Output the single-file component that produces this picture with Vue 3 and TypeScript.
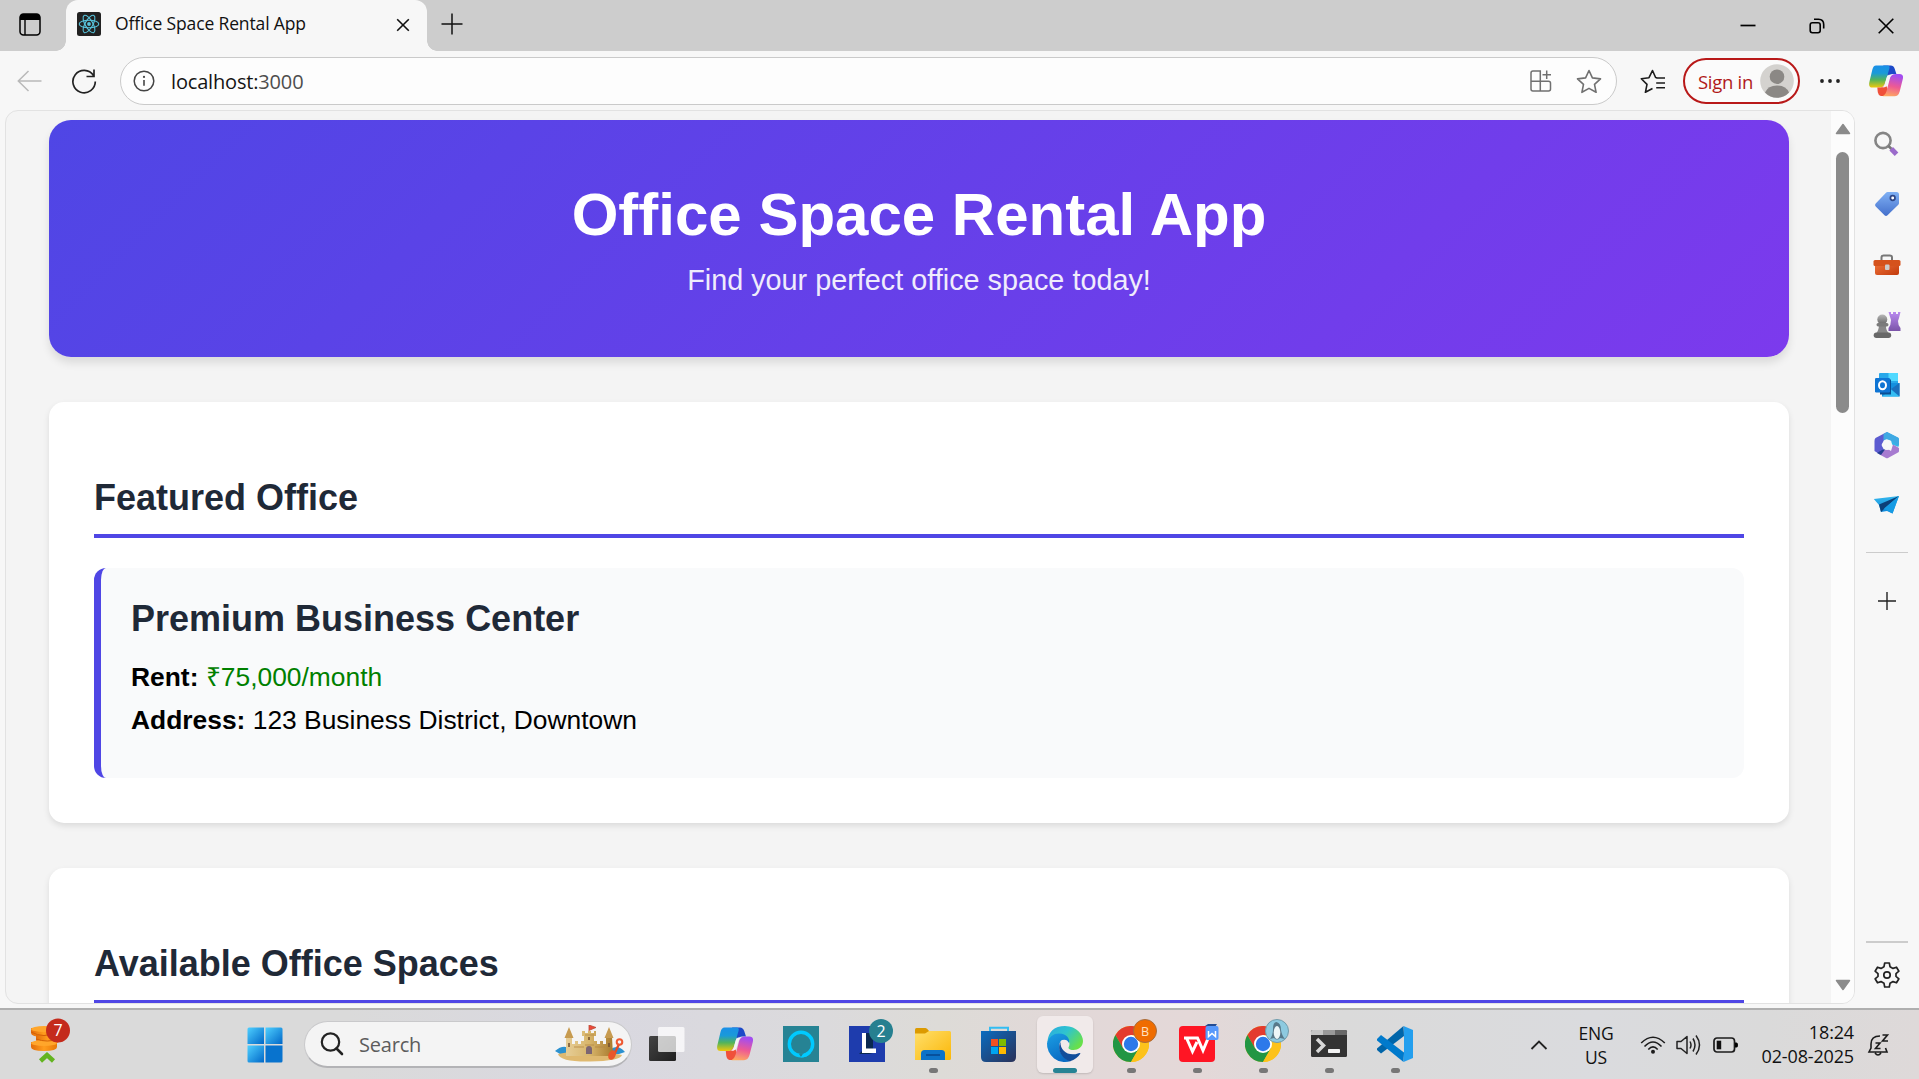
<script setup lang="ts">
interface Office {
  name: string
  rent: string
  address: string
}

interface TaskItem {
  id: string
  running: boolean
  active?: boolean
}

const title = 'Office Space Rental App'

const featured: Office = {
  name: 'Premium Business Center',
  rent: '₹75,000/month',
  address: '123 Business District, Downtown',
}

const tasks: TaskItem[] = [
  { id: 'taskview', running: false },
  { id: 'copilot', running: false },
  { id: 'alexa', running: false },
  { id: 'lapp', running: false },
  { id: 'folder', running: true },
  { id: 'store', running: false },
  { id: 'edge', running: true, active: true },
  { id: 'chromeb', running: true },
  { id: 'wps', running: true },
  { id: 'chromep', running: true },
  { id: 'terminal', running: true },
  { id: 'vscode', running: true },
]
</script>

<template>
  <div class="screen">
    <!-- shared symbols -->
    <svg class="defs" width="0" height="0">
      <defs>
        <linearGradient id="cpA" x1="0" y1="0" x2="0" y2="1">
          <stop offset="0" stop-color="#1a8fe8" /><stop offset=".35" stop-color="#1a9ad8" />
          <stop offset=".65" stop-color="#54b45a" /><stop offset="1" stop-color="#f2c80a" />
        </linearGradient>
        <linearGradient id="cpB" x1=".3" y1="0" x2=".1" y2="1">
          <stop offset="0" stop-color="#a34df0" /><stop offset=".5" stop-color="#ee5a93" />
          <stop offset="1" stop-color="#ffb05c" />
        </linearGradient>
        <linearGradient id="winG" x1="0" y1="0" x2="1" y2="1">
          <stop offset="0" stop-color="#4fd0ff" /><stop offset="1" stop-color="#0067c8" />
        </linearGradient>
        <linearGradient id="folderG" x1="0" y1="0" x2="1" y2="1">
          <stop offset="0" stop-color="#ffdf6b" /><stop offset="1" stop-color="#fbb708" />
        </linearGradient>
        <linearGradient id="storeG" x1="0" y1="0" x2="1" y2="1">
          <stop offset="0" stop-color="#0a6cc0" /><stop offset="1" stop-color="#2b3158" />
        </linearGradient>
        <linearGradient id="edgeTop" x1="0" y1="0" x2="1" y2=".6">
          <stop offset="0" stop-color="#2ba8e0" /><stop offset=".5" stop-color="#2fc4cf" /><stop offset="1" stop-color="#68e04a" />
        </linearGradient>
        <linearGradient id="edgeL" x1="0" y1="0" x2=".4" y2="1">
          <stop offset="0" stop-color="#1b9fe4" /><stop offset="1" stop-color="#0a6cc4" />
        </linearGradient>
        <linearGradient id="grayV" x1="0" y1="0" x2="0" y2="1">
          <stop offset="0" stop-color="#b8b8b8" /><stop offset="1" stop-color="#666" />
        </linearGradient>
        <linearGradient id="purV" x1="0" y1="0" x2="0" y2="1">
          <stop offset="0" stop-color="#b98af0" /><stop offset="1" stop-color="#7b54a8" />
        </linearGradient>
        <linearGradient id="tagG" x1="0" y1="0" x2="0" y2="1">
          <stop offset="0" stop-color="#7fb0f4" /><stop offset="1" stop-color="#4470cc" />
        </linearGradient>
        <linearGradient id="boxG" x1="0" y1="0" x2="1" y2="1">
          <stop offset="0" stop-color="#f0743a" /><stop offset="1" stop-color="#c23a0c" />
        </linearGradient>
        <linearGradient id="planeG" x1="0" y1="0" x2="0" y2="1">
          <stop offset="0" stop-color="#35b8ee" /><stop offset="1" stop-color="#0a84d8" />
        </linearGradient>
        <linearGradient id="sandG" x1="0" y1="0" x2="1" y2="0">
          <stop offset="0" stop-color="#e6cd96" /><stop offset=".5" stop-color="#d8b66c" /><stop offset="1" stop-color="#a87a2c" />
        </linearGradient>
        <linearGradient id="coinG" x1="0" y1="0" x2="1" y2="0">
          <stop offset="0" stop-color="#e36c08" /><stop offset=".5" stop-color="#ff9d1e" /><stop offset="1" stop-color="#e87808" />
        </linearGradient>
        <linearGradient id="darkG" x1="0" y1="0" x2="1" y2="1">
          <stop offset="0" stop-color="#444" /><stop offset="1" stop-color="#1f1f1f" />
        </linearGradient>
        <symbol id="copilot" viewBox="0 0 36 36">
          <path d="M15 1.5H23Q26 1.5 27.200 5L29 10.500H25Q22 10.500 20.500 14L17.500 8Z" fill="#1c49c8" />
          <path d="M7.500 1.500H20Q22.500 1.800 21.500 5L17 20.500Q15.500 25 11 25H3.500Q-.7 25 .3 19.500L3.500 6Q4.500 1.500 7.500 1.500Z" fill="url(#cpA)" />
          <path d="M8.800 25H12Q15.500 24.500 17 20L20 27 17 34H12.500Q10 33.500 9.300 30Z" fill="#f0503a" />
          <path d="M28.500 10.500H32.500Q37 10.600 35.800 16L32.500 29Q31 34.200 27 34.200H14.500Q17.500 32.500 18.500 29L22.300 14.500Q23.500 10.600 28.500 10.500Z" fill="url(#cpB)" />
          <path d="M21 11.500H24Q22 13 21.400 15.500L19.500 22Q18.500 25 14 24.800Q16 23.500 17 20.500L18.700 14.500Q19.500 12 21 11.500Z" fill="#f4f4f6" />
        </symbol>
        <symbol id="chromeLogo" viewBox="0 0 36 36">
          <circle cx="18" cy="18" r="18" fill="#fcc21b" />
          <path d="M18 18L10 22.600 2.400 9A18 18 0 0 1 33.600 9H18Z" fill="#e33b2e" />
          <path d="M18 18L25.800 22.500 18 36A18 18 0 0 1 2.400 9L10.200 22.500Z" fill="#229644" />
          <path d="M18 9H33.600A18 18 0 0 1 18 36L25.800 22.500Z" fill="#fcc21b" />
          <circle cx="18" cy="18" r="9" fill="#fff" /><circle cx="18" cy="18" r="7.200" fill="#2c79ea" />
        </symbol>
      </defs>
    </svg>

    <header class="tabs">
      <svg class="workspaces" width="22" height="23" viewBox="0 0 22 23">
        <rect x="1" y="1" width="20" height="21" rx="3.500" fill="none" stroke="#000" stroke-width="1.500" />
        <path d="M1 7V4Q1 1 4 1H18Q21 1 21 4V7Z" /><path d="M6 7V22" stroke="#000" stroke-width="1.400" />
      </svg>
      <div class="tab">
        <svg class="react" width="24" height="24" viewBox="0 0 24 24">
          <rect width="24" height="24" rx="2.500" fill="#222" />
          <g fill="none" stroke="#58c4dc" stroke-width="1.100">
            <ellipse cx="12" cy="12" rx="9.800" ry="3.800" /><ellipse cx="12" cy="12" rx="9.800" ry="3.800" transform="rotate(60 12 12)" />
            <ellipse cx="12" cy="12" rx="9.800" ry="3.800" transform="rotate(120 12 12)" />
          </g><circle cx="12" cy="12" r="1.900" fill="#58c4dc" />
        </svg>
        <span class="tab-title">{{ title }}</span>
        <svg class="tab-close" width="14" height="14" viewBox="0 0 14 14"><path d="M1.200 1.200L12.800 12.800M12.800 1.200L1.200 12.800" stroke="#111" stroke-width="1.600" /></svg>
      </div>
      <svg class="new-tab" width="22" height="22" viewBox="0 0 22 22"><path d="M.5 11H21.500M11 .5V21.500" stroke="#111" stroke-width="1.500" /></svg>
      <div class="win-ctl">
        <svg width="16" height="16" viewBox="0 0 16 16"><path d="M.5 7.500H15.500" stroke="#000" stroke-width="1.700" /></svg>
        <svg width="16" height="16" viewBox="0 0 16 16" fill="none" stroke="#000" stroke-width="1.600"><rect x="1.200" y="4.800" width="10" height="10" rx="2.200" /><path d="M5 1.300H9.500Q14.700 1.500 14.700 6.500V10.500" /></svg>
        <svg width="16" height="16" viewBox="0 0 16 16"><path d="M.7 .7L15.300 15.300M15.300 .7L.7 15.300" stroke="#000" stroke-width="1.600" /></svg>
      </div>
    </header>

    <div class="toolbar">
      <svg class="back" width="25" height="22" viewBox="0 0 25 22"><path d="M24.500 11H1.500M11.500 1L1.300 11L11.500 21" fill="none" stroke="#b9b9b9" stroke-width="1.500" /></svg>
      <svg class="reload" width="26" height="26" viewBox="0 0 26 26" fill="none" stroke="#222" stroke-width="1.700"><path d="M22.500 7.500A11.200 11.200 0 1 0 24.300 13.500M23 1.500V8.500H15.500" /></svg>
      <div class="address">
        <svg class="info" width="22" height="22" viewBox="0 0 22 22"><circle cx="11" cy="11" r="9.800" fill="none" stroke="#444" stroke-width="1.500" /><path d="M11 10V15.800" stroke="#444" stroke-width="1.600" /><circle cx="11" cy="6.900" r="1.100" fill="#444" /></svg>
        <span class="url"><b>localhost:</b>3000</span>
        <svg class="apps" width="22" height="22" viewBox="0 0 22 22" fill="none" stroke="#707070" stroke-width="1.500"><path d="M10.300 11.300V1H3Q1 1 1 3V19Q1 21 3 21H18.500Q20.500 21 20.500 19V13.300Q20.500 11.300 18.500 11.300H1M10.300 11.300V21M16.700 .5V9M12.500 4.700H21" /></svg>
        <svg class="star" width="26" height="25" viewBox="0 0 26 25"><path d="M13 1.500L16.400 8.900 24.500 9.900 18.500 15.400 20.100 23.300 13 19.400 5.900 23.300 7.500 15.400 1.500 9.900 9.600 8.900Z" fill="none" stroke="#707070" stroke-width="1.600" stroke-linejoin="round" /></svg>
      </div>
      <svg class="favs" width="26" height="25" viewBox="0 0 26 25" fill="none" stroke="#1c1c1c" stroke-width="1.600" stroke-linejoin="round"><path d="M17 8.700L15.600 8.500 12.500 1.500 9 8.700 1.300 9.700 7 15.400 5.400 23.300 12.500 19.500M16.200 9H25M16.200 14H25M16.200 18.700H25" /></svg>
      <button class="signin">Sign in
        <svg width="34" height="34" viewBox="0 0 34 34"><circle cx="17" cy="17" r="16.800" fill="#d4d2cf" /><circle cx="17" cy="12.700" r="7.300" fill="#8b8885" /><path d="M5 28.500Q8 21.500 17 21.500T29 28.500Q24 33.800 17 33.800T5 28.500Z" fill="#8b8885" /></svg>
      </button>
      <svg class="dots" width="22" height="6" viewBox="0 0 22 6" fill="#222"><circle cx="3" cy="3" r="1.900" /><circle cx="11" cy="3" r="1.900" /><circle cx="19" cy="3" r="1.900" /></svg>
      <svg class="cop" width="34" height="34"><use href="#copilot" /></svg>
    </div>

    <div class="body">
      <div class="viewport">
        <main class="page">
          <section class="hero">
            <h1>{{ title }}</h1>
            <p>Find your perfect office space today!</p>
          </section>
          <section class="card">
            <h2>Featured Office</h2>
            <article class="office">
              <h3>{{ featured.name }}</h3>
              <p><strong>Rent:</strong> <span class="rent">{{ featured.rent }}</span></p>
              <p><strong>Address:</strong> {{ featured.address }}</p>
            </article>
          </section>
          <section class="card"><h2>Available Office Spaces</h2></section>
        </main>
        <div class="scroll">
          <svg width="16" height="12" viewBox="0 0 16 12"><path d="M8 1.500L14.500 10.500H1.500Z" fill="#8b8b8b" stroke="#8b8b8b" stroke-width="1.500" stroke-linejoin="round" /></svg>
          <div class="thumb"></div>
          <svg class="down" width="16" height="12" viewBox="0 0 16 12"><path d="M8 10.500L14.500 1.500H1.500Z" fill="#8b8b8b" stroke="#8b8b8b" stroke-width="1.500" stroke-linejoin="round" /></svg>
        </div>
      </div>
      <aside class="side">
        <svg viewBox="0 0 28 28"><circle cx="10" cy="10.500" r="7.600" fill="none" stroke="#858585" stroke-width="2.600" /><path d="M15.500 16L18.500 19" stroke="#777" stroke-width="2.500" /><path d="M18.200 18.800L23.500 24.300" stroke="#9b6bcb" stroke-width="5" stroke-linejoin="round" /></svg>
        <svg viewBox="0 0 28 28"><path d="M14.500 2H23.500Q26 2 26 4.500V13Q26 14 25.300 14.800L14.500 25.300Q13 26.700 11.500 25.300L2.700 16.500Q1.300 15 2.700 13.500L13 2.700Q13.600 2 14.500 2Z" fill="url(#tagG)" /><circle cx="19.700" cy="8" r="2.300" fill="#fff" stroke="#2e4687" stroke-width="1.700" /></svg>
        <svg viewBox="0 0 28 28"><path d="M8.500 10V6.500Q8.500 4.500 10.500 4.500H17Q19 4.500 19 6.500V10" fill="none" stroke="#777" stroke-width="2" /><rect x="2" y="11" width="24" height="13" rx="2" fill="url(#boxG)" /><rect x=".5" y="9" width="27" height="6" rx="1.500" fill="#d5521c" /><rect x="12" y="13.500" width="4.500" height="5.500" rx="1" fill="#ccc" /></svg>
        <svg viewBox="0 0 28 28"><path d="M15.500 1H18V3H20V1H23V3H25V1H27.500L26 7 25 10Q25 14.500 27.500 17V20H15.500V17Q18 14 18 9Z" fill="url(#purV)" /><circle cx="9.300" cy="8.500" r="5" fill="url(#grayV)" /><path d="M6 13H13Q12.500 19 15.500 22H3.500Q6 19 6 13Z" fill="#888" /><rect x="3.500" y="12" width="12" height="3.500" rx="1.700" fill="#7b7b7b" /><rect x=".7" y="21.500" width="17.500" height="5.500" rx="2.700" fill="#686868" /></svg>
        <svg viewBox="0 0 28 28"><rect x="6" y="2" width="19" height="16" rx="1" fill="#28a8ea" /><path d="M15.500 2H25V10H15.500Z" fill="#50d9ff" /><path d="M9 12H26.500V25.500H9Z" fill="#1490df" /><path d="M26.500 12L18 18 26.500 25.500Z" fill="#1a6fbd" /><path d="M9 25.500L18 18.500 26.500 25.500Z" fill="#35bdf3" /><rect x="7" y="8.500" width="11" height="15" fill="#0a4e93" /><rect x="2" y="7" width="15" height="14.500" rx="1.200" fill="#0f75d4" /><ellipse cx="9.500" cy="14.200" rx="3.500" ry="4" fill="none" stroke="#fff" stroke-width="2" /></svg>
        <svg viewBox="0 0 28 28"><path d="M14 1L25.500 7V16L19 13.500 18 9 13 8Z" fill="#35b5e9" /><path d="M14 1L2.500 7Q1.500 8 1.500 10V20L7 23.500 11 18 8.500 14 11 9Z" fill="#5c5bd0" /><path d="M6.500 21.500L14 17.500 18 20 20 13.500 26 17V20Q26 21 25 21.500L15 27Q14 27.500 13 27L6.500 23.500Z" fill="#a77bd0" /><path d="M14 1L10.500 3V9.500L14 8 18.500 10 26 15V8Q26 7 25 6.500Z" fill="#3fa9e3" /><path d="M9 19L12.500 17.800 8 24 4 22Z" fill="#243e91" /><circle cx="14" cy="14.300" r="4.800" fill="#f7f7f7" /></svg>
        <svg viewBox="0 0 28 28"><path d="M.8 7L26 4 19.500 21.500 14 19 8 20 6 13Z" fill="url(#planeG)" /><path d="M6 12.500L26 4 11 17 8 20Z" fill="#0c3f78" /><path d="M11 16.500L26 4 19.500 21.500Z" fill="#159be4" /></svg>
        <hr />
        <svg class="plus" viewBox="0 0 20 20"><path d="M1 10H19M10 1V19" stroke="#222" stroke-width="1.400" /></svg>
        <hr class="low" />
        <svg class="gear" viewBox="0 0 28 28" fill="none" stroke="#222" stroke-width="1.700" stroke-linejoin="round"><path d="M11.700 2H16.300L17 5.700 20 7.400 23.500 6.200 25.900 10.200 23 12.600V15.400L25.900 17.800 23.500 21.800 20 20.600 17 22.300 16.300 26H11.700L11 22.300 8 20.600 4.500 21.800 2.100 17.800 5 15.400V12.600L2.100 10.200 4.500 6.200 8 7.400 11 5.700Z" /><circle cx="14" cy="14" r="3.200" /></svg>
      </aside>
    </div>

    <footer class="taskbar">
      <svg class="widget" width="44" height="44" viewBox="0 0 44 44">
        <g fill="url(#coinG)"><path d="M2 7V12Q2 16 15 16T28 12V7Z" /><path d="M7 14V19Q7 23 19 23T31 19V14Z" /><path d="M2 21V26Q2 30 15 30T28 26V21Z" /></g>
        <g fill="#ffa62b"><ellipse cx="15" cy="8" rx="13" ry="3" /><ellipse cx="15" cy="22" rx="13" ry="3" /></g>
        <path d="M2 11Q15 18 28 11M7 18Q18 22 30 18" fill="none" stroke="#d35f05" stroke-width="1" />
        <path d="M11.500 40L18 34 24.500 40" fill="none" stroke="#63b420" stroke-width="4.500" />
        <circle cx="29" cy="9.500" r="12" fill="#c42b1c" /><text x="29" y="15" text-anchor="middle" font-size="16" fill="#fff">7</text>
      </svg>
      <svg class="start" width="36" height="36" viewBox="0 0 36 36"><g fill="url(#winG)"><path d="M2 .5H17V17H.5V2Q.5 .5 2 .5Z" /><path d="M18.500 .5H34Q35.500 .5 35.500 2V17H18.500Z" /><path d="M.5 18.500H17V35.500H2Q.5 35.500 .5 34Z" /></g><path d="M18.500 18.500H35.500V34Q35.500 35.500 34 35.500H18.500Z" fill="#0873ce" /></svg>
      <div class="search">
        <svg width="24" height="24" viewBox="0 0 24 24"><circle cx="10.500" cy="10" r="8.700" fill="none" stroke="#222" stroke-width="2.200" /><path d="M16.500 16.500L22 22" stroke="#222" stroke-width="2.600" stroke-linecap="round" /></svg>
        <span>Search</span>
        <svg class="castle" width="72" height="38" viewBox="0 0 72 38">
          <path d="M1 26Q10 18 18 25H56Q63 18 71 27L65 29H6Z" fill="#2c91cf" />
          <path d="M4 29Q34 22 68 30Q66 36 36 36.500T4 29Z" fill="#dfb970" />
          <path d="M12 12H18V19H21V16H24V19H27V16H30V11H28V6H31V8H34V6H37V8H40V6H42V11H40V16H43V19H46V16H49V19H52V12H58L59 31H12Z" fill="url(#sandG)" />
          <path d="M10.500 13L15 2 19.500 13ZM50.500 13L55 2 59.500 13Z" fill="#c79b50" />
          <path d="M31 10H40M31 20H40M20 22H30M41 22H51" stroke="#b48643" stroke-width=".8" />
          <path d="M35 6V0L42 2.500 36 5" fill="#ee493b" stroke="#b84d36" stroke-width=".8" />
          <path d="M32 29V24Q32 21 35 21T38 24V29Z" fill="#7c6572" /><path d="M15 18V22M55 18V22M35 12V15" stroke="#775532" stroke-width="1.600" />
          <path d="M65 19L60 30" stroke="#e64b25" stroke-width="2.400" /><circle cx="65.500" cy="17" r="2.800" fill="none" stroke="#ee5932" stroke-width="2" /><ellipse cx="58" cy="30" rx="3.500" ry="5" transform="rotate(25 58 30)" fill="#e9582a" />
        </svg>
      </div>

      <div class="tasks">
        <div v-for="t in tasks" :key="t.id" class="task" :class="{ active: t.active, running: t.running }">
          <svg width="46" height="46" viewBox="-5 -7 46 46">
            <template v-if="t.id === 'taskview'"><rect x="-2" y="10" width="27" height="25" rx="1.500" fill="url(#darkG)" /><rect x="7" y="1" width="26.500" height="25" rx="1.500" fill="#fff" fill-opacity=".74" /></template>
            <use v-else-if="t.id === 'copilot'" href="#copilot" width="36" height="36" />
            <template v-else-if="t.id === 'alexa'"><rect width="36" height="36" fill="#268394" /><circle cx="18" cy="18" r="11.700" fill="none" stroke="#00caff" stroke-width="3.400" /><path d="M16 28L18 31 21 27" fill="#268394" /><path d="M20 28Q24 28 27 25L28 27Q24 31.500 18 31.500Z" fill="#00caff" /></template>
            <template v-else-if="t.id === 'lapp'"><rect width="36" height="36" fill="#1e3cad" /><path d="M13 7V25L10 28H20L24 27V7Z" fill="#0a2850" /><path d="M13 7H17V22.500H27V27H13Z" fill="#fff" /><circle cx="32" cy="5" r="12" fill="#268090" /><text x="32" y="10.500" text-anchor="middle" font-size="16" fill="#fff">2</text></template>
            <template v-else-if="t.id === 'folder'"><path d="M0 3.500Q0 2 1.500 2H10.500Q12 2 14 5V9H0Z" fill="#dc9a00" /><path d="M0 7.500H10L14 5H34.500Q36 5 36 6.500V32.500Q36 34 34.500 34H0Z" fill="url(#folderG)" /><path d="M6 34V27.500Q6 24 9.500 24H26.500Q30 24 30 27.500V34Z" fill="#0c72c8" /><path d="M11 29H25" stroke="#07509c" stroke-width="2" /></template>
            <template v-else-if="t.id === 'store'"><path d="M9 8V1.800H27V8" fill="none" stroke="#33bdf2" stroke-width="2" /><path d="M0 5H35V31Q35 36 30 36H5Q0 36 0 31Z" fill="url(#storeG)" /><path d="M10 13H17V20H10Z" fill="#f25022" /><path d="M18 13H25V20H18Z" fill="#7fba00" /><path d="M10 21H17V28H10Z" fill="#00a4ef" /><path d="M18 21H25V28H18Z" fill="#ffb900" /></template>
            <template v-else-if="t.id === 'edge'"><path d="M.3 16Q2 0 18 0C30 0 36 9 36 15C36 21 31 24 26.500 24C22 24 21 22 21.700 21C24 17 21 12.500 16 12.500Z" fill="url(#edgeTop)" /><path d="M0 17Q3 7.500 12 7.500C20 7.500 23 13 22 17Q20 12.500 15 14C9 18 13 32 24 35A18 18 0 0 1 0 17Z" fill="url(#edgeL)" /><path d="M13.500 16C9.500 23 15 33 23 35.300Q30 33 33.500 27.500Q33 26.500 31.500 27.200C22 31 13 25 13.500 16Z" fill="#114d9b" /></template>
            <template v-else-if="t.id === 'chromeb'"><use href="#chromeLogo" width="36" height="36" /><circle cx="32" cy="5" r="11.500" fill="#ef6c00" stroke="#a76c3c" /><text x="32" y="9.700" text-anchor="middle" font-size="12.500" fill="#ffe1c2">B</text></template>
            <template v-else-if="t.id === 'wps'"><rect width="36" height="36" rx="4" fill="#ff1524" /><path d="M5 12H18.500L24 24.500 29 12.500M7.500 12L13.500 25.500 18 16M18.500 12L24 24.500" fill="none" stroke="#fff" stroke-width="3" /><path d="M26 0L29-2H38L36 1Z" fill="#244c93" /><rect x="26.500" y="0" width="13" height="14" rx="2" fill="#5798fb" /><path d="M29.500 5V10.500L33 7.500 36.500 10.500V5" fill="none" stroke="#fff" stroke-width="1.500" /></template>
            <template v-else-if="t.id === 'chromep'"><use href="#chromeLogo" width="36" height="36" /><circle cx="32" cy="5" r="11.500" fill="#8dcae0" stroke="#739cab" /><path d="M25 13Q28 9 28 3Q28-4 31.500-4Q36-3 36 4Q37 10 40 13L35 12Q32 15 29 12Z" fill="#58798a" /><ellipse cx="32" cy="6.500" rx="3.300" ry="6.500" fill="#edf6f8" /></template>
            <template v-else-if="t.id === 'terminal'"><rect y="4" width="36" height="27" rx="1.500" fill="#333" /><path d="M0 9V5.500Q0 4 1.500 4H12V9Z" fill="#c6c6c6" /><path d="M12 4H24V9H12Z" fill="#999" /><path d="M24 4H34.500Q36 4 36 5.500V9H24Z" fill="#686868" /><path d="M6 13L12.500 19.500 6 26" fill="none" stroke="#d8d8d8" stroke-width="3.500" /><rect x="17" y="23" width="12" height="4" rx=".7" fill="#f2f2f2" /></template>
            <template v-else><path d="M26.500 0L27 10 4 27.500 0 24V22.500Z" fill="#0065a9" /><path d="M0 13L4 9 27 26.500 26.500 36 0 14.500Z" fill="#007acc" /><path d="M26.500 0L36 4V32L26.500 36Q27 35 27 33V3Q27 1 26.500 0Z" fill="#249fee" /></template>
          </svg>
          <i></i>
        </div>
      </div>

      <div class="tray">
        <svg class="chev" width="18" height="12" viewBox="0 0 18 12"><path d="M1.500 10L9 2.500 16.500 10" fill="none" stroke="#222" stroke-width="1.800" /></svg>
        <div class="lang">ENG<br />US</div>
        <svg class="wifi" width="26" height="20" viewBox="0 0 26 20" fill="none" stroke="#1c1c1c" stroke-width="1.600"><path d="M1.200 8Q13-3.500 24.800 8M4.500 11.500Q13 2.500 21.500 11.500M8.300 14.500Q13 9.300 17.700 14.500" /><circle cx="13" cy="16.700" r="2" fill="#1c1c1c" stroke="none" /></svg>
        <svg class="vol" width="26" height="22" viewBox="0 0 26 22" fill="none" stroke="#222" stroke-width="1.500" stroke-linejoin="round"><path d="M1 7.500H5L11 2.500V19.500L5 14.500H1ZM14 7.500Q16 11 14 14.500M17 4.500Q21 11 17 17.500M20 1.500Q27 11 20 20.500" /></svg>
        <svg class="bat" width="26" height="16" viewBox="0 0 26 16"><rect x="1" y="1" width="20.500" height="14" rx="3" fill="none" stroke="#1c1c1c" stroke-width="1.700" /><rect x="3.700" y="3.700" width="4.500" height="8.600" fill="#111" /><path d="M22 5.500H23.500Q25 5.500 25 8T23.500 10.500H22Z" /></svg>
        <div class="clock">18:24<br />02-08-2025</div>
        <svg class="bell" width="24" height="24" viewBox="0 0 24 24" fill="none" stroke="#1c1c1c" stroke-width="1.600"><path d="M13 3Q4 3 4 11V15L2 19H20L18.500 15M8 20Q11 24 14 20M8.500 10H13L8.500 15.500H13.500M15.500 2H20.500L15.500 8H21" /></svg>
      </div>
    </footer>
  </div>
</template>

<style>
body { overflow: hidden; }
</style>

<style scoped>
.screen { width: 1919px; height: 1079px; display: flex; flex-direction: column; overflow: hidden; background: #f7f7f7; font-family: "Open Sans", "Noto Sans", sans-serif; color: #111; }
.screen * { box-sizing: border-box; }
svg { display: block; flex: none; }
.defs { position: absolute; }
.tabs { height: 51px; background: #cdcdcd; display: flex; align-items: flex-start; flex: none; }
.workspaces { margin: 13px 24px 0 19px; }
.tab { position: relative; width: 361px; height: 51px; margin-left: 1px; background: #f7f7f7; border-radius: 12px 12px 0 0; display: flex; padding-left: 11px; }
.tab::before, .tab::after { content: ""; position: absolute; bottom: 0; width: 10px; height: 10px; }
.tab::before { left: -10px; background: radial-gradient(circle at 0 0, transparent 9.5px, #f7f7f7 10px); }
.tab::after { right: -10px; background: radial-gradient(circle at 100% 0, transparent 9.5px, #f7f7f7 10px); }
.react { margin-top: 12px; }
.tab-title { margin: 10px 0 0 14px; width: 281px; font-size: 17.500px; line-height: 26px; letter-spacing: -.14px; white-space: nowrap; }
.tab-close { margin-top: 18px; }
.new-tab { margin: 13px 0 0 14px; }
.win-ctl { margin: 18px 25px 0 auto; display: flex; gap: 53px; }
.toolbar { height: 59px; flex: none; display: flex; align-items: center; padding-top: 1px; }
.back { margin-left: 17px; }
.reload { margin-left: 29px; }
.address { margin-left: 23px; width: 1497px; height: 48px; border: 1px solid #cacaca; border-radius: 24px; background: #fdfdfd; display: flex; align-items: center; padding-left: 12px; }
.url { margin: 0 auto 0 16px; font-size: 20px; letter-spacing: -.17px; color: #4d4d4d; }
.url b { font-weight: 400; color: #151515; }
.star { margin: 0 14px 0 24px; }
.favs { margin-left: 23px; }
.signin { margin-left: 17px; width: 117px; height: 46px; border: 2px solid #b81818; border-radius: 23px; background: #fbfbfb; color: #b01818; font: 18.500px "Open Sans", sans-serif; letter-spacing: -.3px; display: flex; align-items: center; justify-content: space-between; padding: 0 4px 0 13px; white-space: nowrap; }
.dots { margin-left: 19px; }
.cop { margin-left: 28px; }
.body { height: 898px; display: flex; flex: none; }
.viewport { width: 1850px; height: 894px; margin-left: 5px; border: 1px solid #e2e2e2; border-radius: 13px; overflow: hidden; display: flex; background: #f4f4f4; }
.page { width: 1825px; height: 892px; overflow: hidden; padding: 9px 42px 0 43px; font-family: "Liberation Sans", Arial, sans-serif; color: #000; }
.hero { height: 237px; border-radius: 22px; background: linear-gradient(135deg, #4f46e5, #7c3aed); box-shadow: 0 6px 9px rgba(0,0,0,.1); color: #fff; text-align: center; padding-top: 61px; }
h1, h2, h3, p { margin: 0; }
h1 { font-size: 60px; line-height: 68px; }
.hero p { font-size: 28.800px; line-height: 33px; margin-top: 15px; opacity: .9; }
.card { height: 421px; margin-top: 45px; padding: 75px 45px 0; border-radius: 15px; background: #fff; box-shadow: 0 3px 6px rgba(0,0,0,.1); }
h2, h3 { color: #1f2937; font-size: 36px; line-height: 41px; }
h2 { height: 61px; border-bottom: 4px solid #4f46e5; }
.office { height: 210px; margin-top: 30px; border-left: 7px solid #4f46e5; border-radius: 12px; background: #f9fafb; padding: 30px; }
.office p { font-size: 26.400px; line-height: 30px; margin-top: 13px; }
.office h3 + p { margin-top: 23px; }
.rent { color: #008000; }
.scroll { width: 23px; background: #fcfcfc; display: flex; flex-direction: column; align-items: center; padding: 12px 0 12px; }
.thumb { width: 13px; height: 261px; margin-top: 17px; border-radius: 7px; background: #8b8b8b; }
.down { margin-top: auto; }
.side { width: 64px; display: flex; flex-direction: column; align-items: center; padding: 20px 0 0; }
.side svg { width: 28px; height: 28px; margin-bottom: 32.300px; }
.side hr { width: 42px; height: 1px; margin: 0; border: 0; background: #ccc; flex: none; }
.side .plus { width: 20px; height: 20px; margin: 38px 0 330px; }
.side .low { height: 2px; }
.side .gear { margin: 18px 0 0; }
.taskbar { height: 71px; flex: none; border-top: 2px solid #afafaf; background: linear-gradient(90deg, #dadada 0, #dadada 18%, #d9d8e0 31%, #dbdadc 43%, #dddbd7 49%, #e2d8d8 56%, #e4d8d8 62%, #dadada 70%, #dadbde 83%, #dadada 92%, #ded9d9 100%); display: flex; align-items: center; }
.taskbar text { font-family: "Open Sans", sans-serif; }
.widget { margin: -4px 0 0 29px; overflow: visible; }
.start { margin-left: 174px; }
.search { width: 328px; height: 47px; margin-left: 21px; border: 1px solid #c9c9cb; border-bottom: 2px solid #b3b3b6; border-radius: 24px; background: #f4f4f4; display: flex; align-items: center; padding: 0 5px 0 15px; font-size: 20px; color: #5c5c5c; }
.search span { margin: 1px auto 0 15px; letter-spacing: -.2px; }
.tasks { display: flex; margin-left: 4px; }
.task { position: relative; width: 66px; height: 69px; display: flex; justify-content: center; padding-top: 9px; }
.task svg { overflow: visible; position: relative; }
.task.active::before { content: ""; position: absolute; left: 5px; top: 6px; width: 56px; height: 57px; border-radius: 6px; background: #f1eaea; box-shadow: 0 1px 2px rgba(0,0,0,.15); }
.task i { display: none; position: absolute; left: 29px; top: 58px; width: 9px; height: 5px; border-radius: 3px; background: #777; }
.task.running i { display: block; }
.task.active i { left: 21px; width: 24px; background: #268394; }
.tray { margin-left: auto; display: flex; align-items: center; font-size: 17.500px; line-height: 24px; white-space: nowrap; }
.lang { width: 42px; margin: 1px 0 0 27px; text-align: center; letter-spacing: -.2px; }
.wifi { margin-left: 23px; }
.vol { margin-left: 10px; }
.bat { margin-left: 11px; }
.clock { width: 100px; margin: -2px 0 0 15px; text-align: right; font-size: 18px; letter-spacing: -.15px; }
.bell { margin: 0 28px 0 13px; }
</style>
